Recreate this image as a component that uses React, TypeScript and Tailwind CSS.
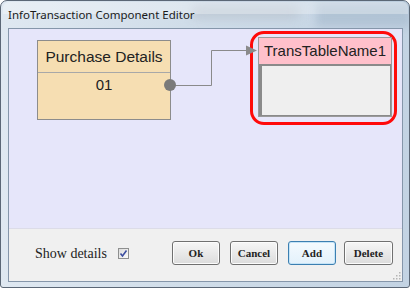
import React from "react";

function Connector() {
  return (
    <svg className="absolute left-0 top-0" width="393" height="199" viewBox="0 0 393 199">
      <polyline points="161,56.5 202.5,56.5 202.5,21.5 238,21.5" fill="none" stroke="#8a8a8a" strokeWidth="1" />
      <polygon points="237,16.5 248,21.5 237,26.5" fill="#8a8a8a" />
      <circle cx="161" cy="56" r="6" fill="#7a7a7a" />
    </svg>
  );
}

function Btn({ label, focus = false, className = "" }: { label: string; focus?: boolean; className?: string }) {
  return (
    <button
      className={
        "h-[24px] w-[48px] rounded-[3px] border text-[11px] font-bold text-[#222] [font-family:'Liberation_Serif',serif] " +
        (focus
          ? "border-[#3c7fb1] bg-[linear-gradient(#f4fafe,#e3f1fb)] shadow-[inset_0_0_0_1px_#c5e4f7] "
          : "border-[#707070] bg-[linear-gradient(#f6f6f6,#e9e9e9_50%,#dcdcdc)] shadow-[inset_0_0_0_1px_#fcfcfc] ") +
        className
      }
    >
      {label}
    </button>
  );
}

export default function App() {
  return (
    <div className="w-[410px] h-[288px] bg-white [font-family:'Liberation_Sans',Arial,sans-serif]">
      <div className="relative w-[410px] h-[288px] rounded-t-[7px] rounded-b-[3px] border border-[#5b6776] bg-[linear-gradient(90deg,#dfe8f1,#d0dde9_45%,#c3d3e3)] flex flex-col overflow-hidden">
        {/* blurred window behind the glass title bar */}
        <div className="absolute left-[190px] top-[4px] w-[110px] h-[14px] rounded-full bg-[#b9c3cf] blur-[5px] opacity-70" />
        <div className="absolute left-[315px] top-[2px] w-[95px] h-[24px] bg-[#a9bccf] blur-[4px] opacity-70" />
        <div className="absolute left-[2px] top-[1px] w-[405px] h-[12px] bg-white/30 rounded-t-[6px]" />

        <div className="relative h-[27px] pl-[7px] flex items-center text-[11.5px] text-[#1b1b1b] [font-family:'Noto_Sans',sans-serif]">
          InfoTransaction Component Editor
        </div>

        <div className="relative ml-[7px] mr-[6px] mb-[5px] flex-1 border border-[#8596aa] flex flex-col">
          <div className="relative h-[199px] bg-[#e6e6fa]">
            <div className="absolute left-[28px] top-[11px] w-[134px] h-[80px] border border-[#8c8c8c] bg-[#f6deb2] flex flex-col">
              <div className="h-[32px] border-b border-[#a8a8a8] flex items-center justify-center text-[15.5px] text-[#222]">
                Purchase Details
              </div>
              <div className="h-[25px] flex items-center justify-center text-[15px] text-[#222]">01</div>
            </div>

            <div className="absolute left-[241px] top-[2px] w-[147px] h-[94px] rounded-[14px] border-[3px] border-[#ff0a0a]" />

            <div className="absolute left-[249px] top-[8px] w-[134px] h-[80px] border border-[#9a9a9a] bg-[#f0f0f0] flex flex-col">
              <div className="h-[26px] bg-[#ffc0cb] flex items-center justify-center text-[15px] text-[#222]">
                TransTableName1
              </div>
              <div className="flex-1 border-t-2 border-l-[3px] border-[#8a8a8a] bg-[#efefef] border-b border-r" />
            </div>

            <Connector />
          </div>

          <div className="relative flex-1 bg-[#f0f0f0] flex items-center pb-[4px] border-t border-[#dcdce8]">
            <span className="ml-[26px] text-[14px] text-[#222] [font-family:'Liberation_Serif',serif]">Show details</span>
            <span className="ml-[11px] w-[11px] h-[11px] border border-[#8e8f8f] bg-[linear-gradient(135deg,#dcdcdc,#fbfbfb)] flex items-center justify-center">
              <svg width="9" height="9" viewBox="0 0 9 9">
                <path d="M1.5 4.5 L3.5 7 L7.5 1.5" fill="none" stroke="#3c4ea0" strokeWidth="1.6" />
              </svg>
            </span>
            <Btn label="Ok" className="ml-[43px] w-[47px]" />
            <Btn label="Cancel" className="ml-[10px]" />
            <Btn label="Add" focus className="ml-[10px]" />
            <Btn label="Delete" className="ml-[8px] w-[49px]" />
            <svg className="absolute right-[1px] bottom-[1px]" width="9" height="9" viewBox="0 0 9 9">
              <g fill="#b5b5b5">
                <rect x="7" y="1" width="1.5" height="1.5" />
                <rect x="4" y="4" width="1.5" height="1.5" />
                <rect x="7" y="4" width="1.5" height="1.5" />
                <rect x="1" y="7" width="1.5" height="1.5" />
                <rect x="4" y="7" width="1.5" height="1.5" />
                <rect x="7" y="7" width="1.5" height="1.5" />
              </g>
            </svg>
          </div>
        </div>
      </div>
    </div>
  );
}
